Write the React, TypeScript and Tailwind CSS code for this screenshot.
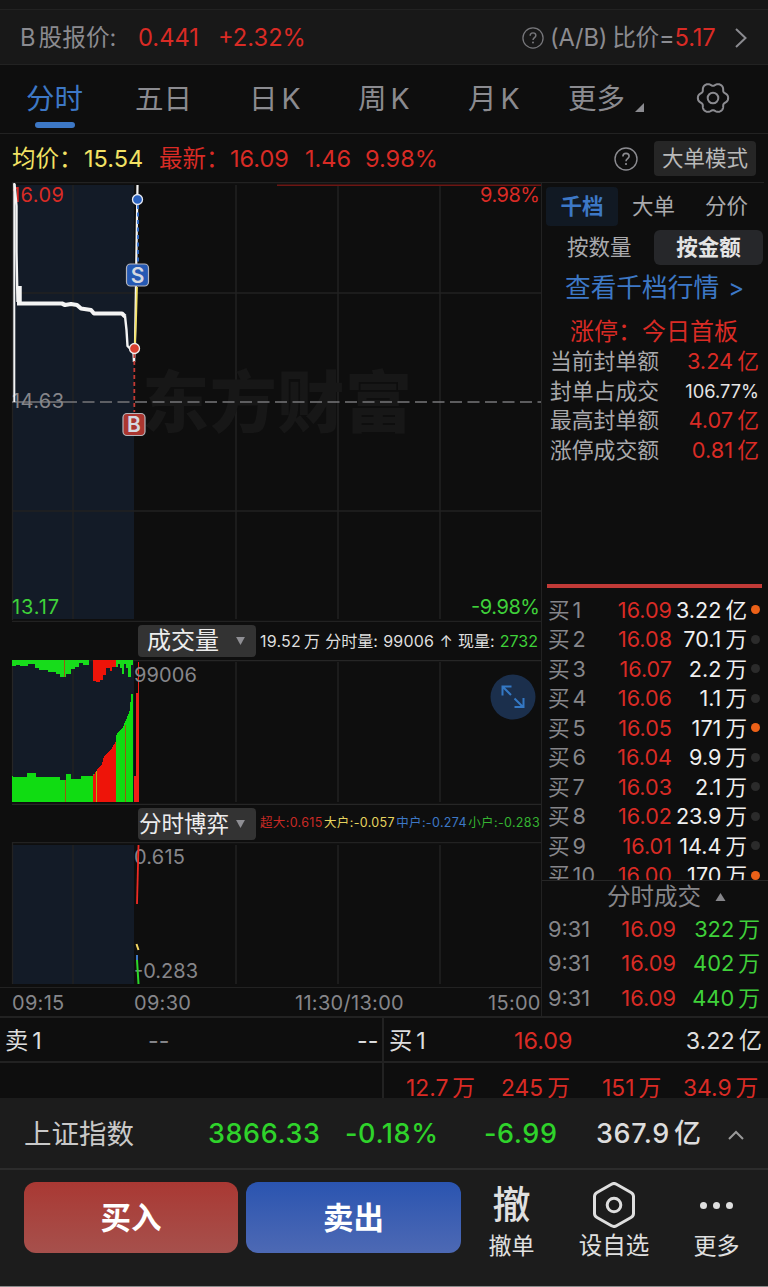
import type { ReactNode } from "react";

const FONT = "font-['Inter','Noto_Sans_CJK_SC',sans-serif]";

const tabs = [
  { label: "分时", width: "w-[109px]", active: true },
  { label: "五日", width: "w-[114px]" },
  { label: "日", k: true, width: "w-[109px]" },
  { label: "周", k: true, width: "w-[110px]" },
  { label: "月", k: true, width: "w-[100px]" },
];

const sealStats = [
  { label: "当前封单额", value: "3.24", unit: "亿" },
  { label: "封单占成交", value: "106.77%" },
  { label: "最高封单额", value: "4.07", unit: "亿" },
  { label: "涨停成交额", value: "0.81", unit: "亿" },
];

const bids = [
  { price: "16.09", size: "3.22", unit: "亿", hot: true },
  { price: "16.08", size: "70.1", unit: "万" },
  { price: "16.07", size: "2.2", unit: "万" },
  { price: "16.06", size: "1.1", unit: "万" },
  { price: "16.05", size: "171", unit: "万", hot: true },
  { price: "16.04", size: "9.9", unit: "万" },
  { price: "16.03", size: "2.1", unit: "万" },
  { price: "16.02", size: "23.9", unit: "万" },
  { price: "16.01", size: "14.4", unit: "万" },
  { price: "16.00", size: "170", unit: "万", hot: true },
];

const trades = [
  { time: "9:31", price: "16.09", size: "322" },
  { time: "9:31", price: "16.09", size: "402" },
  { time: "9:31", price: "16.09", size: "440" },
];

const gearPoints = Array.from({ length: 120 }, (_, i) => {
  const a = (i / 120) * Math.PI * 2;
  const r = 13.9 + 1.5 * Math.cos(6 * a) - 0.25 * Math.cos(12 * a);
  return `${(17 + r * Math.cos(a)).toFixed(2)},${(17 + r * Math.sin(a)).toFixed(2)}`;
}).join(" ");

function Amount({ value, unit }: { value: string; unit?: string }) {
  return (
    <>
      {value}
      {unit && <span className="ml-1 tracking-normal">{unit}</span>}
    </>
  );
}

function HelpIcon({ className }: { className: string }) {
  return (
    <svg viewBox="0 0 24 24" className={className} fill="none" stroke="currentColor">
      <circle cx="12" cy="12" r="11" strokeWidth="1.4" />
      <path d="M8.900 9.600c0-2 1.300-3.200 3.100-3.200s3.100 1.200 3.100 2.800c0 2.300-3.100 2.500-3.100 5" strokeWidth="1.6" />
      <circle cx="12" cy="17" r="1.1" fill="currentColor" stroke="none" />
    </svg>
  );
}

function Header() {
  return (
    <>
      <div className="h-[9px] shrink-0 bg-[#161616]" />
      <div className="flex h-[56px] shrink-0 items-center border-y border-[#222222] bg-[#181818] pt-px pl-5 text-[23.700px] text-[#8b8b90]">
        <span className="w-[118px] whitespace-nowrap">
          B<span className="ml-[3px]">股报价</span>:
        </span>
        <span className="w-[80px] text-[#d92b25]">0.441</span>
        <span className="w-[304px] text-[#d92b25]">+2.32%</span>
        <HelpIcon className="mr-[6px] h-[22px] w-[22px] text-[#77777b]" />
        <span className="whitespace-nowrap tracking-[-0.2px]">
          (A/B)<span className="ml-[5px]">比价</span>=<span className="text-[#d92b25]">5.17</span>
        </span>
        <svg viewBox="0 0 14 22" className="mr-5 ml-auto h-[22px] w-[14px] shrink-0" fill="none" stroke="#8b8b90" strokeWidth="2">
          <path d="M2 2l9.500 9L2 20" />
        </svg>
      </div>
    </>
  );
}

function TabBar() {
  return (
    <div className="flex h-[69px] shrink-0 border-b border-[#222222] pl-[26px] text-[28.5px] leading-[68px] text-[#8b8b90]">
      {tabs.map((tab) => (
        <div key={tab.label} className={`shrink-0 whitespace-nowrap ${tab.width}`}>
          <div className={`h-[57px] ${tab.active ? "text-[#3d78c6]" : ""}`}>
            {tab.label}
            {tab.k && <span className="ml-[4px]">K</span>}
          </div>
          {tab.active && <div className="ml-[9px] h-[6px] w-[40px] rounded-full bg-[#3d78c6]" />}
        </div>
      ))}
      <div className="flex w-[128px] items-start whitespace-nowrap">
        更多
        <svg viewBox="0 0 9 9" className="mt-[38px] ml-[10px] h-[9px] w-[9px]" fill="#8b8b90">
          <path d="M9 0v9H0z" />
        </svg>
      </div>
      <svg viewBox="0 0 34 34" className="mt-[16px] h-[34px] w-[34px] shrink-0" fill="none" stroke="#8b8b90" strokeWidth="2">
        <polygon points={gearPoints} strokeLinejoin="round" />
        <circle cx="17" cy="17" r="5.300" />
      </svg>
    </div>
  );
}

function PriceSummary() {
  return (
    <div className="flex h-[48px] shrink-0 items-center pt-px pl-3 text-[23.500px] whitespace-nowrap text-[#d92b25]">
      <span className="w-[72px] text-[#f3e264]">均价：</span>
      <span className="w-[75px] text-[#f3e264]">15.54</span>
      <span className="w-[71px]">最新：</span>
      <span className="w-[75px]">16.09</span>
      <span className="w-[60px]">1.46</span>
      <span className="w-[249px]">9.98%</span>
      <HelpIcon className="h-6 w-6 text-[#8b8b90]" />
      <span className="ml-4 flex h-[35px] w-[102px] items-center justify-center rounded bg-[#262626] text-[21.5px] text-[#b9b9b9]">
        大单模式
      </span>
    </div>
  );
}

function Badge({ x, y, fill, children }: { x: number; y: number; fill: string; children: ReactNode }) {
  return (
    <g>
      <rect x={x - 11} y={y - 11} width="22" height="22" rx="4" fill={fill} stroke="#b5b5bb" strokeWidth="1.2" />
      <text x={x} y={y + 7.5} textAnchor="middle" fontSize="21" fontWeight="600" fill="#d5d8e0">
        {children}
      </text>
    </g>
  );
}

function VerticalGrid({ top, bottom }: { top: number; bottom: number }) {
  return (
    <g stroke="#222222" strokeWidth="1.5">
      {[73, 236, 338, 440].map((x) => (
        <line key={x} x1={x} x2={x} y1={top} y2={bottom} />
      ))}
    </g>
  );
}

function PriceChart() {
  return (
    <svg viewBox="0 182 541 440" className="block h-[440px] w-[541px]" fontSize="20">
      <rect x="12" y="185" width="122" height="434" fill="#131b27" />
      <VerticalGrid top={185} bottom={619} />
      <g stroke="#222222" strokeWidth="1.3">
        <path d="M12.500 182v438M12 182.500h529M12 293h529M12 511h529M12 621.500h529" />
      </g>
      <text x="142" y="427" fontSize="67" fontWeight="900" fill="#171717" textLength="270">东方财富</text>
      <path d="M277 185.300h264" stroke="#6d1613" strokeWidth="1.600" />
      <path d="M65 402h476" stroke="#77777a" strokeWidth="1.300" strokeDasharray="12 5.500" />
      <path d="M12 402h53" stroke="#77777a" strokeWidth="1.300" />
      <text x="12" y="202" fill="#d92b25" textLength="52">16.09</text>
      <text x="12" y="408" fill="#86868a" textLength="52">14.63</text>
      <text x="12" y="614" fill="#3fd13a" textLength="47">13.17</text>
      <text x="480" y="202" fill="#d92b25" textLength="60">9.98%</text>
      <text x="471" y="614" fill="#3fd13a" textLength="69">-9.98%</text>
      <g fill="none" stroke="#f4f4f4" strokeLinejoin="round">
        <path d="M14.300 183v219" strokeWidth="2" />
        <path d="M14.500 184l2 22v46l1 50" strokeWidth="2.400" />
        <path d="M19.500 286v17" strokeWidth="4.500" />
        <path d="M17 303.500h45l3 1.500 6-1 6 1 4 3.500 10 1.500 3 3.500h28l3 3" strokeWidth="4.200" />
        <path d="M125 316l1.500 14 1 16 3 3 3 3 .500 10" strokeWidth="2.400" />
        <path d="M134 362l1-18 2.500-159" strokeWidth="2.200" />
      </g>
      <path d="M137 287l-.800 28-1.200 28" stroke="#f3e264" strokeWidth="1.800" fill="none" />
      <path d="M138 205v59" stroke="#2f6ed0" strokeWidth="1.800" strokeDasharray="4 3.500" />
      <path d="M134.300 354v58" stroke="#c33a34" strokeWidth="1.800" strokeDasharray="4 3" />
      <circle cx="137.500" cy="199.500" r="5" fill="#2a62c0" stroke="#e6e9f2" strokeWidth="1.300" />
      <circle cx="134.500" cy="348.500" r="5" fill="#d8402f" stroke="#eeeeee" strokeWidth="1.300" />
      <Badge x={137.5} y={275} fill="#2559b3">S</Badge>
      <Badge x={134} y={424.5} fill="#ab3630">B</Badge>
    </svg>
  );
}

function VolumeChart() {
  return (
    <svg viewBox="0 660 541 145" className="block h-[145px] w-[541px]" fontSize="20">
      <rect x="12" y="660" width="122" height="142" fill="#131b27" />
      <VerticalGrid top={662} bottom={802} />
      <path d="M12.500 660v142M12 660.500h529M12 804.300h529" stroke="#262626" strokeWidth="1.300" />
      <g shapeRendering="crispEdges">
        <path
          d="M12 660h77v5h-6v-2h-4v4h-4v2h-4v5h-5v3h-6v-3h-4v-2h-8v-2h-9v-2h-4v-4h-7v2h-8v-1h-4v1h-4zM116 660h17v5h-2v12h-3v-9h-2v-4h-2v10h-2v-6h-2v-4h-2v3h-2z"
          fill="#17dc1b"
        />
        <path d="M93 660h23v7h-4v4h-2v-3h-4v7h-3v5h-3v2h-4v-1h-3z" fill="#ee1409" />
        <path
          d="M12 802v-26h1v1h14v-4h9v4h24v3h6v-6h5v5h10v-3h12v-2h3v28zM116 802v-66l2-4 5-5 3-7 4-10 1-16h2v108z"
          fill="#10dc12"
        />
        <path d="M93 802v-26l4-6 5-6 2-8 8-8 4-7v61z" fill="#ee1409" />
        <path d="M65 780v22M125 725v77M64.500 660v17" stroke="#9b5a10" strokeWidth="1" />
        <path d="M96.500 771v31" stroke="#a5b814" strokeWidth="1" />
        <path d="M134 802v-26h2v-83h1.500v-31h1.500v140z" fill="#ee1f17" />
      </g>
      <text x="134" y="682" fill="#86868a" textLength="63">99006</text>
      <g>
        <circle cx="513" cy="697" r="22.500" fill="#1b2f4c" />
        <path d="M502.500 695.500v-9h9M503 687l8 8M514.500 698.500l8 8M523.500 698v9h-9" stroke="#3478c4" strokeWidth="2" fill="none" />
      </g>
    </svg>
  );
}

function GameChart() {
  return (
    <svg viewBox="0 842 541 145" className="block h-[145px] w-[541px]" fontSize="20">
      <rect x="12" y="845" width="122" height="139" fill="#131b27" />
      <VerticalGrid top={845} bottom={984} />
      <path d="M12.500 842v142M12 842.500h529" stroke="#222222" strokeWidth="1.300" />
      <text x="134" y="864" fill="#86868a" textLength="51">0.615</text>
      <text x="134" y="978" fill="#86868a" textLength="64">-0.283</text>
      <path d="M138.500 845l-1.500 59" stroke="#ee2a24" strokeWidth="1.800" />
      <path d="M136.500 944l2 6" stroke="#f3d764" strokeWidth="2" />
      <path d="M137 955v6" stroke="#3d78c6" strokeWidth="2" />
      <path d="M137 960l1.500 24" stroke="#2bd62b" strokeWidth="2" />
    </svg>
  );
}

function IndicatorSelect({ label, className }: { label: string; className: string }) {
  return (
    <span className={`flex h-8 w-[118px] shrink-0 items-center justify-between rounded bg-[#333333] pr-[11px] text-[#ededed] ${className}`}>
      {label}
      <svg viewBox="0 0 10 9" className="h-[8px] w-[9px]" fill="#8f8f94">
        <path d="M0 0h10L5 9z" />
      </svg>
    </span>
  );
}

function Charts() {
  return (
    <div className="flex w-[542px] shrink-0 flex-col border-r border-[#222222]">
      <PriceChart />
      <div className="flex h-[38px] items-center pl-[138px] whitespace-nowrap">
        <IndicatorSelect label="成交量" className="pl-[9px] text-2xl" />
        <span className="ml-1 flex w-[278px] justify-between text-[16px] text-[#dedede]">
          <span className="tracking-[0.200px]">19.52<span className="ml-[3px]">万</span></span>
          <span>分时量:</span>
          <span className="tracking-[0.200px]">99006</span>
          <span>↑</span>
          <span>现量:</span>
          <span className="text-[#3fd13a]">2732</span>
        </span>
      </div>
      <VolumeChart />
      <div className="flex h-[37px] items-center pl-[138px] whitespace-nowrap">
        <IndicatorSelect label="分时博弈" className="pl-[1px] text-[22.5px]" />
        <span className="ml-1 flex w-[280px] justify-between text-[12.5px] tracking-[0.350px]">
          <span className="text-[#c92a25]">超大:0.615</span>
          <span className="text-[#e6d45e]">大户:-0.057</span>
          <span className="text-[#3d78c6]">中户:-0.274</span>
          <span className="text-[#35b331]">小户:-0.283</span>
        </span>
      </div>
      <GameChart />
      <div className="flex h-[29px] items-center border-t border-[#222222] pt-[2px] pl-3 text-xl tracking-[0.300px] whitespace-nowrap text-[#86868a]">
        <span className="w-[122px]">09:15</span>
        <span className="w-[161px]">09:30</span>
        <span className="w-[193px]">11:30/13:00</span>
        <span>15:00</span>
      </div>
    </div>
  );
}

function OrderBook() {
  return (
    <div className="flex w-[226px] flex-col whitespace-nowrap">
      <div className="mr-1 flex h-[44px] items-center border-t border-[#222222] pt-[4px] pl-1 text-[21.500px] text-[#a9a9ac]">
        <span className="flex h-[39px] w-[72px] items-center justify-center rounded bg-[#111923] font-bold text-[#3d78c6]">千档</span>
        <span className="ml-[14px] w-[73px]">大单</span>
        <span>分价</span>
      </div>
      <div className="mt-1 flex h-[35px] items-center pl-[25px] text-[21.500px] text-[#a9a9ac]">
        <span className="w-[87px]">按数量</span>
        <span className="flex h-[35px] w-[109px] items-center justify-center rounded-md bg-[#26272a] font-bold text-[#e4e4e4]">按金额</span>
      </div>
      <div className="flex h-[46px] items-center pl-[23px] text-[25.700px] text-[#3d78c6]">
        查看千档行情<span className="ml-[9px] text-[24px]">&gt;</span>
      </div>
      <div className="flex h-[36px] items-center justify-center pt-[6px] pr-[2px] text-2xl text-[#d92b25]">涨停：今日首板</div>
      <div className="pr-[9px] pl-2">
        {sealStats.map((s) => (
          <div key={s.label} className="flex h-[29.5px] items-center justify-between text-[21.800px] text-[#a9a9ac]">
            {s.label}
            {s.unit ? (
              <span className="text-[21.800px] text-[#d92b25]">
                <Amount value={s.value} unit={s.unit} />
              </span>
            ) : (
              <span className="text-[18.300px] text-[#e4e4e4]">{s.value}</span>
            )}
          </div>
        ))}
      </div>
      <div className="mt-[119px] ml-[5px] h-1 w-[215px] shrink-0 bg-[#c13a37]" />
      <div className="h-[293px] overflow-hidden border-b border-[#262626] pt-[7px] pl-[6px]">
        {bids.map((b, i) => (
          <div key={b.price} className="flex h-[29.5px] items-center text-[21.600px]">
            <span className="w-[54px] text-[#86868a]">
              买<span className="ml-[3px]">{i + 1}</span>
            </span>
            <span className="w-[70px] text-right text-[#d92b25]">{b.price}</span>
            <span className="w-[75px] text-right text-[#f0f0f0]">
              <Amount value={b.size} unit={b.unit} />
            </span>
            <span className={`ml-1 h-[9px] w-[9px] rounded-full ${b.hot ? "bg-[#ec6118]" : "bg-[#2b2b2b]"}`} />
          </div>
        ))}
      </div>
      <div className="flex h-[31px] items-center pl-[65px] text-[23.500px] text-[#86868a]">
        分时成交
        <svg viewBox="0 0 10 8" className="ml-[14px] h-[8px] w-[11px]" fill="#86868a">
          <path d="M5 0l5 8H0z" />
        </svg>
      </div>
      {trades.map((t) => (
        <div key={t.size} className="flex h-[34.5px] items-center pl-[6px] text-[21.800px]">
          <span className="w-[54px] text-[#86868a]">{t.time}</span>
          <span className="w-[74px] text-right text-[#d92b25]">{t.price}</span>
          <span className="w-[84px] text-right text-[#3fd13a]">
            <Amount value={t.size} unit="万" />
          </span>
        </div>
      ))}
    </div>
  );
}

function BestQuotes() {
  return (
    <div className="flex h-[82px] shrink-0 border-t-2 border-[#222222] text-[23.300px] whitespace-nowrap text-[#dedede]">
      <div className="w-[384px] border-r-2 border-[#222222]">
        <div className="flex h-[45px] items-center border-b-2 border-[#222222] pt-[4px] pl-[5px]">
          <span className="w-[143px]">
            卖<span className="ml-[4px]">1</span>
          </span>
          <span className="w-[209px] text-[#86868a]">--</span>
          <span>--</span>
        </div>
      </div>
      <div className="w-[384px]">
        <div className="flex h-[45px] items-center border-b-2 border-[#222222] pt-[4px] pr-[6px] pl-[5px]">
          <span className="w-[125px]">
            买<span className="ml-[4px]">1</span>
          </span>
          <span className="text-[#d92b25]">16.09</span>
          <span className="ml-auto">
            <Amount value="3.22" unit="亿" />
          </span>
        </div>
        <div className="flex h-[35px] items-start overflow-hidden pl-[22px] text-[22.800px] leading-[49px] text-[#d92b25]">
          <span className="w-[95px]"><Amount value="12.7" unit="万" /></span>
          <span className="w-[101px]"><Amount value="245" unit="万" /></span>
          <span className="w-[81px]"><Amount value="151" unit="万" /></span>
          <span><Amount value="34.9" unit="万" /></span>
        </div>
      </div>
    </div>
  );
}

function IndexBar() {
  return (
    <div className="flex h-[72px] shrink-0 items-center border-b-2 border-[#2c2c2c] bg-[#1c1c1c] pt-[3px] pl-6 text-[27px] font-medium tracking-[0.600px] whitespace-nowrap text-[#2fd32b]">
      <span className="w-[184px] text-[27.500px] font-normal tracking-normal text-[#c9c9c9]">上证指数</span>
      <span className="w-[137px]">3866.33</span>
      <span className="w-[139px]">-0.18%</span>
      <span className="w-[112px]">-6.99</span>
      <span className="text-[#dddddd]">
        <Amount value="367.9" unit="亿" />
      </span>
      <svg viewBox="0 0 16 10" className="mr-[24px] ml-auto h-[10px] w-4 shrink-0" fill="none" stroke="#9a9a9a" strokeWidth="2">
        <path d="M1 9l7-7 7 7" />
      </svg>
    </div>
  );
}

function ActionBar() {
  return (
    <div className="flex h-[117px] shrink-0 border-b border-[#8a8a8a] bg-[#1c1c1c] pt-[12px] pl-6 text-[#e0e0e0]">
      <button className="h-[71px] w-[214px] rounded-xl bg-linear-to-b from-[#a93833] to-[#a6504c] text-[30.500px] font-bold text-white">
        买入
      </button>
      <button className="ml-2 h-[71px] w-[215px] rounded-xl bg-linear-to-b from-[#2a54b0] to-[#4d69b4] text-[30.500px] font-bold text-white">
        卖出
      </button>
      <div className="flex w-[101px] flex-col items-center">
        <span className="h-[46px] text-[38px] leading-[44px] font-medium">撤</span>
        <span className="text-[23px] leading-[36px]">撤单</span>
      </div>
      <div className="flex w-[104px] flex-col items-center">
        <svg viewBox="0 0 44 46" className="h-[46px] w-[44px]" fill="none" stroke="#dedede" strokeWidth="3" strokeLinejoin="round">
          <path d="M19.500 2.200q2.500-1.400 5 0L39 10.500q2.500 1.400 2.500 4v17q0 2.600-2.500 4L24.500 43.800q-2.500 1.400-5 0L5 35.500q-2.500-1.400-2.500-4v-17q0-2.600 2.500-4z" />
          <circle cx="22" cy="23" r="6.800" />
        </svg>
        <span className="text-[23.500px] leading-[36px]">设自选</span>
      </div>
      <div className="flex w-[101px] flex-col items-center">
        <div className="flex h-[46px] items-center gap-[6px]">
          <i className="h-[7px] w-[7px] rounded-full bg-[#dedede]" />
          <i className="h-[7px] w-[7px] rounded-full bg-[#dedede]" />
          <i className="h-[7px] w-[7px] rounded-full bg-[#dedede]" />
        </div>
        <span className="text-[23px] leading-[36px]">更多</span>
      </div>
    </div>
  );
}

export default function App() {
  return (
    <div className={`flex h-[1287px] w-[768px] flex-col overflow-hidden bg-[#0e0e0e] ${FONT}`}>
      <Header />
      <TabBar />
      <PriceSummary />
      <div className="flex h-[834px] shrink-0">
        <Charts />
        <OrderBook />
      </div>
      <BestQuotes />
      <IndexBar />
      <ActionBar />
    </div>
  );
}
